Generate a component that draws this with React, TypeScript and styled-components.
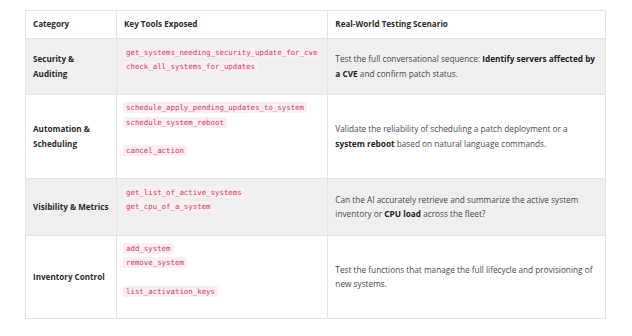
import React from 'react';
import styled, { createGlobalStyle } from 'styled-components';

const GlobalStyle = createGlobalStyle`
  html, body {
    margin: 0;
    padding: 0;
    background: #ffffff;
  }
  body {
    font-family: 'Open Sans', Lato, sans-serif;
  }
`;

const Page = styled.div`
  width: 632px;
  height: 336px;
  padding: 10px 0 0 25px;
  box-sizing: border-box;
`;

const Table = styled.table`
  width: 581px;
  border-collapse: collapse;
  border: 1px solid #e4e4e4;
  font-size: 8.25px;
  color: #4a4a4a;
`;

const HeadCell = styled.th<{ $width?: number }>`
  width: ${({ $width }) => ($width ? `${$width}px` : 'auto')};
  height: 28px;
  padding: 0 4px 0 7px;
  box-sizing: border-box;
  text-align: left;
  font-size: 8.1px;
  font-weight: 700;
  color: #2b2b2b;
  background: #ffffff;
  border: 1px solid #e4e4e4;
  line-height: 14.4px;
`;

const Row = styled.tr<{ $shaded?: boolean }>`
  background: ${({ $shaded }) => ($shaded ? '#efefef' : '#ffffff')};
`;

const Cell = styled.td<{ $height: number }>`
  height: ${({ $height }) => $height}px;
  padding: 0 7px 0 7px;
  box-sizing: border-box;
  vertical-align: middle;
  border: 1px solid #e4e4e4;
  line-height: 14.4px;
`;

const CategoryCell = styled(Cell)`
  padding-right: 3px;
  font-size: 8.1px;
  font-weight: 700;
  color: #2b2b2b;
`;

const ToolLine = styled.div`
  height: 14.4px;
  display: flex;
  align-items: center;
`;

const Code = styled.code`
  font-family: 'DejaVu Sans Mono', 'Liberation Mono', monospace;
  font-size: 7.4px;
  line-height: 11px;
  color: #cc3f66;
  background: #fbeef1;
  border-radius: 2px;
  padding: 0 3px;
  margin-left: -1px;
`;

const Strong = styled.strong`
  font-weight: 700;
  color: #222222;
`;

type RowData = {
  category: React.ReactNode;
  tools: (string | null)[];
  scenario: React.ReactNode;
  height: number;
  shaded: boolean;
};

const rows: RowData[] = [
  {
    category: (
      <>
        Security &amp;
        <br />
        Auditing
      </>
    ),
    tools: ['get_systems_needing_security_update_for_cve', 'check_all_systems_for_updates', null],
    scenario: (
      <>
        Test the full conversational sequence: <Strong>Identify servers affected by a CVE</Strong> and
        confirm patch status.
      </>
    ),
    height: 56,
    shaded: true,
  },
  {
    category: (
      <>
        Automation &amp;
        <br />
        Scheduling
      </>
    ),
    tools: ['schedule_apply_pending_updates_to_system', 'schedule_system_reboot', null, 'cancel_action', null],
    scenario: (
      <>
        Validate the reliability of scheduling a patch deployment or a <Strong>system reboot</Strong> based on
        natural language commands.
      </>
    ),
    height: 84,
    shaded: false,
  },
  {
    category: 'Visibility & Metrics',
    tools: ['get_list_of_active_systems', 'get_cpu_of_a_system', null],
    scenario: (
      <>
        Can the AI accurately retrieve and summarize the active system inventory or <Strong>CPU load</Strong>{' '}
        across the fleet?
      </>
    ),
    height: 57,
    shaded: true,
  },
  {
    category: 'Inventory Control',
    tools: ['add_system', 'remove_system', null, 'list_activation_keys', null],
    scenario: <>Test the functions that manage the full lifecycle and provisioning of new systems.</>,
    height: 83,
    shaded: false,
  },
];

export default function App() {
  return (
    <Page>
      <GlobalStyle />
      <Table>
        <thead>
          <tr>
            <HeadCell $width={91}>Category</HeadCell>
            <HeadCell $width={210}>Key Tools Exposed</HeadCell>
            <HeadCell>Real-World Testing Scenario</HeadCell>
          </tr>
        </thead>
        <tbody>
          {rows.map((row, i) => (
            <Row key={i} $shaded={row.shaded}>
              <CategoryCell $height={row.height}>{row.category}</CategoryCell>
              <Cell $height={row.height}>
                {row.tools.map((tool, j) => (
                  <ToolLine key={j}>{tool && <Code>{tool}</Code>}</ToolLine>
                ))}
              </Cell>
              <Cell $height={row.height}>{row.scenario}</Cell>
            </Row>
          ))}
        </tbody>
      </Table>
    </Page>
  );
}
